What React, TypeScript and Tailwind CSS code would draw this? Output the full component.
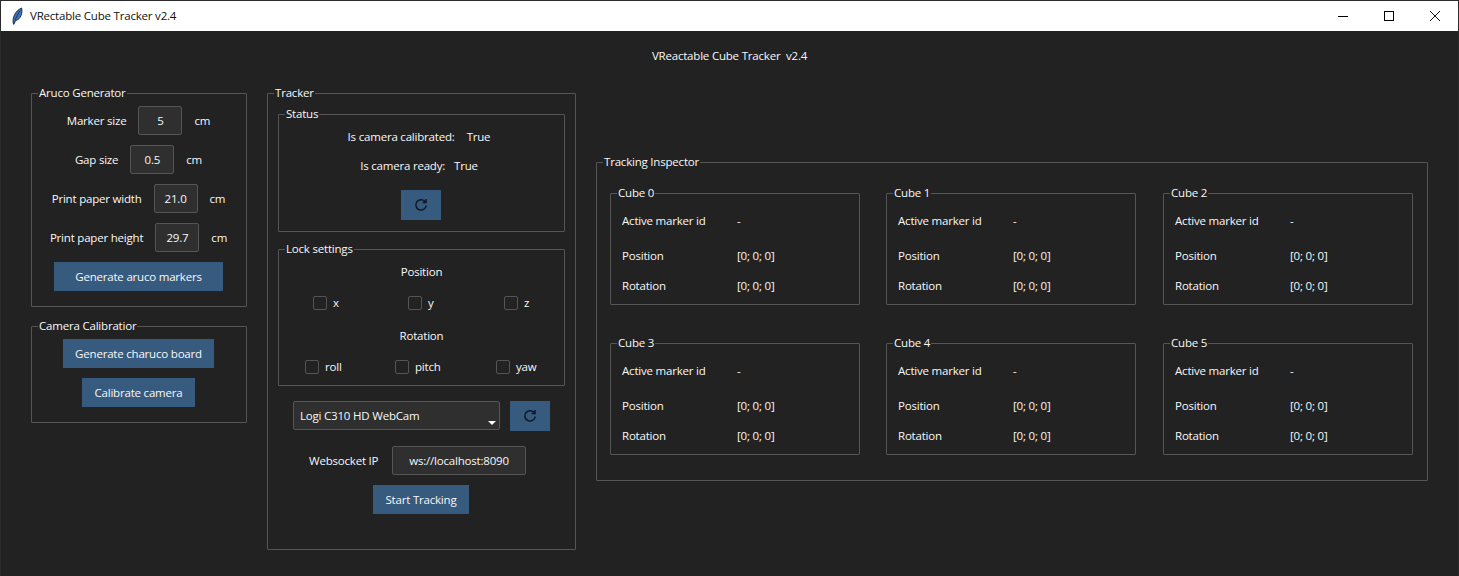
import { ReactNode } from 'react';

function Group({ title, className, children }: { title: string; className: string; children: ReactNode }) {
  return (
    <div className={`relative rounded-[1px] border border-[#555555] ${className}`}>
      {/* legend sits on top of the frame line */}
      <span className="absolute left-[6px] top-[-9px] bg-[#222222] px-px leading-[16px] whitespace-nowrap">{title}</span>
      {children}
    </div>
  );
}

function Entry({ value, className }: { value: string; className: string }) {
  return (
    <div className={`flex h-[29px] items-center justify-center rounded-[2px] border border-[#555555] bg-[#2f2f2f] ${className}`}>
      {value}
    </div>
  );
}

function Button({ label, className }: { label: string; className: string }) {
  return <div className={`flex h-[29px] items-center justify-center bg-[#375a7f] ${className}`}>{label}</div>;
}

function RefreshButton() {
  return (
    <div className="flex h-[30px] w-10 items-center justify-center bg-[#375a7f]">
      <svg width="14" height="14" viewBox="0 0 14 14" fill="none" stroke="#0f172a" strokeWidth="1.5">
        <path d="M11.4 4A5.2 5.2 0 1 0 12.2 7.6" />
        <path d="M12 1V4.4H8.6" />
      </svg>
    </div>
  );
}

function SizeRow({ label, value, unit = 'cm' }: { label: string; value: string; unit?: string }) {
  return (
    <div className="flex items-center justify-center gap-3">
      <span>{label}</span>
      <Entry value={value} className="w-11" />
      <span>{unit}</span>
    </div>
  );
}

function Check({ label, className }: { label: string; className: string }) {
  return (
    <div className={`flex items-center gap-[6px] ${className}`}>
      <span className="size-[14px] rounded-[2px] border border-[#555555]" />
      <span>{label}</span>
    </div>
  );
}

function Cube({ id }: { id: number }) {
  return (
    <Group title={`Cube ${id}`} className="h-[112px] w-[250px] pl-[11px] pt-[12px]">
      <div className="grid grid-cols-[115px_1fr] grid-rows-[30px_5px_30px_30px] items-center">
        <span>Active marker id</span>
        <span>-</span>
        <span className="col-span-2" />
        <span>Position</span>
        <span>[0; 0; 0]</span>
        <span>Rotation</span>
        <span>[0; 0; 0]</span>
      </div>
    </Group>
  );
}

export default function App() {
  return (
    <div className="h-[576px] w-[1459px] overflow-hidden border-l border-t border-r border-[#2b2b2b] bg-[#222222] font-['Open_Sans','Noto_Sans',sans-serif] text-[11.5px] tracking-[-0.2px] text-[#f8f8f8]">
      {/* title bar */}
      <div className="flex h-[30px] items-center bg-white text-[#111111]">
        <svg className="ml-[11px]" width="11" height="18" viewBox="0 0 11 18" fill="none">
          <path d="M1.2 16C0.4 10.5 3 4 9.6 1C10.8 6 9 12 3.6 13.6L1.8 17.4Z" fill="#3f74bd" stroke="#16243a" strokeWidth="0.9" />
          <path d="M8.4 3.4C6.4 6 4.4 9.6 3 13.4" stroke="#16243a" strokeWidth="0.8" />
        </svg>
        <span className="ml-[7px]">VRectable Cube Tracker v2.4</span>
        <div className="ml-auto flex items-center">
          <svg width="46" height="30" viewBox="0 0 46 30" fill="none" stroke="#000000">
            <path d="M18 15.5H28" />
          </svg>
          <svg width="46" height="30" viewBox="0 0 46 30" fill="none" stroke="#000000">
            <rect x="18.5" y="10.5" width="9" height="9" />
          </svg>
          <svg width="46" height="30" viewBox="0 0 46 30" fill="none" stroke="#111111">
            <path d="M18 10L28 20M28 10L18 20" />
          </svg>
        </div>
      </div>

      <div className="flex h-[50px] items-center justify-center pb-[1px]">VReactable Cube Tracker&nbsp; v2.4</div>

      <div className="mt-[12px] flex items-start pl-[30px]">
        {/* left column */}
        <div className="flex w-[216px] flex-col gap-[19px]">
          <Group title="Aruco Generator" className="h-[214px] pr-px pt-[12px]">
            <div className="flex flex-col gap-[10px]">
              <SizeRow label="Marker size" value="5" />
              <SizeRow label="Gap size" value="0.5" />
              <SizeRow label="Print paper width" value="21.0" />
              <SizeRow label="Print paper height" value="29.7" />
              <Button label="Generate aruco markers" className="mx-auto w-[169px]" />
            </div>
          </Group>
          <Group title="Camera Calibratior" className="h-[97px] pr-px pt-[12px]">
            <div className="flex flex-col items-center gap-[10px]">
              <Button label="Generate charuco board" className="w-[151px]" />
              <Button label="Calibrate camera" className="w-[113px]" />
            </div>
          </Group>
        </div>

        {/* tracker column */}
        <Group title="Tracker" className="ml-5 h-[457px] w-[309px] px-[10px] pt-[20px]">
          <Group title="Status" className="h-[118px] w-[287px] pt-[7px]">
            <div className="flex h-[29px] items-center justify-center gap-[12px] pr-[5px]">
              <span>Is camera calibrated:</span>
              <span>True</span>
            </div>
            <div className="flex h-[29px] items-center justify-center gap-[9px] pr-[5px]">
              <span>Is camera ready:</span>
              <span>True</span>
            </div>
            <div className="mt-[10px] flex justify-center pr-[1px]">
              <RefreshButton />
            </div>
          </Group>

          <Group title="Lock settings" className="mt-[17px] h-[137px] w-[287px]">
            <div className="flex h-[44px] items-center justify-center">Position</div>
            <div className="flex pl-[34px]">
              <Check label="x" className="w-[95px]" />
              <Check label="y" className="w-[96px]" />
              <Check label="z" className="w-[60px]" />
            </div>
            <div className="mt-[7px] flex h-[34px] items-center justify-center">Rotation</div>
            <div className="mt-[6px] flex pl-[26px]">
              <Check label="roll" className="w-[90px]" />
              <Check label="pitch" className="w-[101px]" />
              <Check label="yaw" className="w-[60px]" />
            </div>
          </Group>

          <div className="mt-[15px] flex items-start gap-[10px] pl-[15px]">
            <div className="relative flex h-[29px] w-[207px] items-center rounded-[2px] border border-[#555555] bg-[#2f2f2f] pl-[6px]">
              Logi C310 HD WebCam
              <span className="absolute bottom-[4px] right-[3px] size-0 border-x-[4px] border-t-[4px] border-x-transparent border-t-white" />
            </div>
            <RefreshButton />
          </div>

          <div className="mt-[15px] flex items-center gap-[13px] pl-[31px]">
            <span className="w-[70px] whitespace-nowrap">Websocket IP</span>
            <Entry value="ws://localhost:8090" className="w-[134px]" />
          </div>

          <div className="mt-[10px] flex justify-center pr-[1px]">
            <Button label="Start Tracking" className="w-[96px]" />
          </div>
        </Group>

        {/* inspector */}
        <Group title="Tracking Inspector" className="ml-5 mt-[69px] h-[319px] w-[832px] pl-[13px] pt-[30px]">
          <div className="grid grid-cols-[276px_277px_250px] gap-y-[38px]">
            {[0, 1, 2, 3, 4, 5].map((id) => (
              <Cube key={id} id={id} />
            ))}
          </div>
        </Group>
      </div>
    </div>
  );
}
